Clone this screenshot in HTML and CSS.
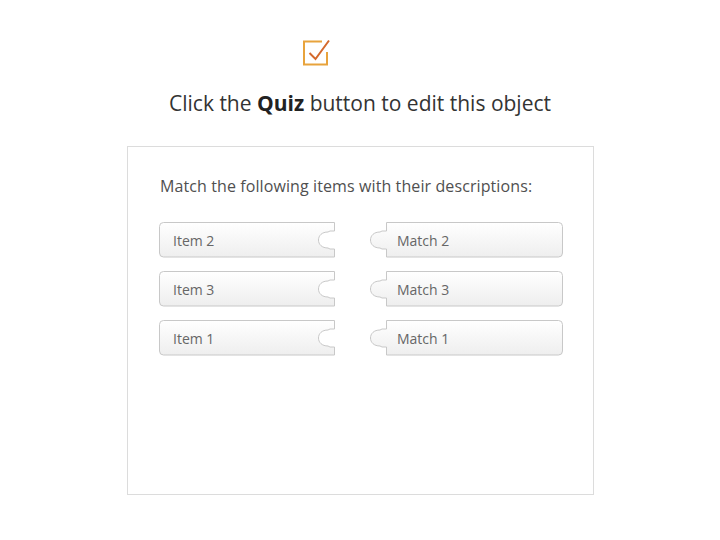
FILE: index.html
```html
<!DOCTYPE html>
<html>
<head>
<meta charset="utf-8">
<link rel="stylesheet" href="styles.css">
</head>
<body>
<div class="page">
  <div class="icon">
    <svg width="30" height="30" viewBox="0 0 30 30">
      <path d="M20 3.5 H2 V26.5 H25 V14" fill="none" stroke="#e8a33c" stroke-width="2"/>
      <path d="M7.5 15 L13.5 21 L27 2.5" fill="none" stroke="#d4692c" stroke-width="2"/>
    </svg>
  </div>
  <p class="hint">Click the <b>Quiz</b> button to edit this object</p>
  <div class="panel">
    <p class="question">Match the following items with their descriptions:</p>
    <div class="pairs">
      <div class="piece left">
        <svg class="shape" width="177" height="36" viewBox="0 0 177 36"><defs><linearGradient id="g1" x1="0" y1="0" x2="0" y2="1"><stop offset="0" stop-color="#ffffff"/><stop offset="1" stop-color="#eeeeee"/></linearGradient></defs><path d="M4.5 0.5 H175.5 V9 H171 C170 9 170 10 169 10 C163 10 159.5 13.5 159.5 18 C159.5 22.5 163 26 169 26 C170 26 170 27 171 27 H175.5 V35 H4.5 Q0.5 35 0.5 31 V4.5 Q0.5 0.5 4.5 0.5 Z" fill="url(#g1)" stroke="#c8c8c8"/></svg>
        <span class="label">Item 2</span>
      </div>
      <div class="piece right">
        <svg class="shape" width="193" height="36" viewBox="0 0 193 36"><path d="M16.5 0.5 H188.5 Q192.5 0.5 192.5 4.5 V31 Q192.5 35 188.5 35 H16.5 V27 H12 C11 27 11 26 10 26 C4 26 0.5 22.5 0.5 18 C0.5 13.5 4 10 10 10 C11 10 11 9 12 9 H16.5 Z" fill="url(#g1)" stroke="#c8c8c8"/></svg>
        <span class="label">Match 2</span>
      </div>
      <div class="piece left">
        <svg class="shape" width="177" height="36" viewBox="0 0 177 36"><path d="M4.5 0.5 H175.5 V9 H171 C170 9 170 10 169 10 C163 10 159.5 13.5 159.5 18 C159.5 22.5 163 26 169 26 C170 26 170 27 171 27 H175.5 V35 H4.5 Q0.5 35 0.5 31 V4.5 Q0.5 0.5 4.5 0.5 Z" fill="url(#g1)" stroke="#c8c8c8"/></svg>
        <span class="label">Item 3</span>
      </div>
      <div class="piece right">
        <svg class="shape" width="193" height="36" viewBox="0 0 193 36"><path d="M16.5 0.5 H188.5 Q192.5 0.5 192.5 4.5 V31 Q192.5 35 188.5 35 H16.5 V27 H12 C11 27 11 26 10 26 C4 26 0.5 22.5 0.5 18 C0.5 13.5 4 10 10 10 C11 10 11 9 12 9 H16.5 Z" fill="url(#g1)" stroke="#c8c8c8"/></svg>
        <span class="label">Match 3</span>
      </div>
      <div class="piece left">
        <svg class="shape" width="177" height="36" viewBox="0 0 177 36"><path d="M4.5 0.5 H175.5 V9 H171 C170 9 170 10 169 10 C163 10 159.5 13.5 159.5 18 C159.5 22.5 163 26 169 26 C170 26 170 27 171 27 H175.5 V35 H4.5 Q0.5 35 0.5 31 V4.5 Q0.5 0.5 4.5 0.5 Z" fill="url(#g1)" stroke="#c8c8c8"/></svg>
        <span class="label">Item 1</span>
      </div>
      <div class="piece right">
        <svg class="shape" width="193" height="36" viewBox="0 0 193 36"><path d="M16.5 0.5 H188.5 Q192.5 0.5 192.5 4.5 V31 Q192.5 35 188.5 35 H16.5 V27 H12 C11 27 11 26 10 26 C4 26 0.5 22.5 0.5 18 C0.5 13.5 4 10 10 10 C11 10 11 9 12 9 H16.5 Z" fill="url(#g1)" stroke="#c8c8c8"/></svg>
        <span class="label">Match 1</span>
      </div>
    </div>
  </div>
</div>
</body>
</html>
```
FILE: styles.css
```css
html, body {
  margin: 0;
  padding: 0;
  background: #ffffff;
}
.page {
  width: 720px;
  height: 540px;
  font-family: "Open Sans", "Noto Sans", sans-serif;
  display: flex;
  flex-direction: column;
}
.icon {
  margin: 38px 0 0 302px;
  height: 30px;
}
.icon svg {
  display: block;
}
.hint {
  margin: 21px 0 0 0;
  text-align: center;
  font-size: 21px;
  line-height: 28px;
  color: #333333;
}
.hint b {
  font-weight: 700;
  color: #222222;
}
.panel {
  margin: 29px 0 0 127px;
  width: 465px;
  height: 347px;
  border: 1px solid #dcdcdc;
}
.question {
  margin: 28px 0 0 32px;
  font-size: 16px;
  line-height: 22px;
  letter-spacing: 0.1px;
  color: #505050;
}
.pairs {
  margin: 25px 0 0 31px;
  display: grid;
  grid-template-columns: 177px 193px;
  column-gap: 34px;
  row-gap: 13px;
}
.piece {
  position: relative;
  height: 36px;
  display: flex;
  align-items: center;
}
.shape {
  position: absolute;
  left: 0;
  top: 0;
}
.label {
  position: relative;
  font-size: 14px;
  color: #666666;
}
.left .label {
  padding-left: 14px;
}
.right .label {
  padding-left: 27px;
}
```
